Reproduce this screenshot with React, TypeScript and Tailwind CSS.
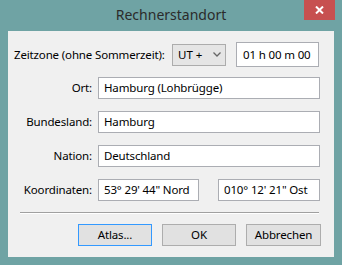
import React from "react";

const font = { fontFamily: '"Noto Sans", "Open Sans", sans-serif' };

const Field: React.FC<{ value: string; className?: string }> = ({ value, className }) => (
  <div
    className={`h-[22px] bg-white border border-[#abadb3] pl-[5px] flex items-center text-[11.5px] tracking-[-0.15px] text-black whitespace-nowrap overflow-hidden ${className ?? ""}`}
  >
    {value}
  </div>
);

const Row: React.FC<{ label: string; children: React.ReactNode }> = ({ label, children }) => (
  <div className="flex items-center h-[22px]">
    <div className="w-[84px] text-right text-[11.5px] tracking-[-0.15px] text-black whitespace-nowrap">{label}</div>
    <div className="ml-[6px] flex">{children}</div>
  </div>
);

const Button: React.FC<{ label: string; primary?: boolean; className?: string }> = ({ label, primary, className }) => (
  <div
    className={`h-[22px] flex items-center justify-center text-[11.5px] tracking-[-0.15px] text-black bg-[#e1e1e1] border ${
      primary ? "border-[#3399ff]" : "border-[#adadad]"
    } ${className ?? ""}`}
  >
    {label}
  </div>
);

export default function App() {
  return (
    <div className="w-[342px] h-[265px] bg-[#6fa3a4] flex flex-col" style={font}>
      <div className="relative h-[31px] flex justify-center">
        <div className="pt-[4px] text-[14px] text-[#2b2b2b]">Rechnerstandort</div>
        <div className="absolute right-[7px] top-0 w-[31px] h-[20px] bg-[#c75050] flex items-center justify-center">
          <svg width="9" height="8" viewBox="0 0 9 8">
            <path d="M1 0.5 L8 7.5 M8 0.5 L1 7.5" stroke="white" strokeWidth="2" />
          </svg>
        </div>
      </div>
      <div className="ml-[8px] w-[326px] h-[226px] bg-[#f0f0f0] flex flex-col">
        <div className="mt-[11px] flex items-center h-[25px]">
          <div className="ml-[6px] w-[158px] text-[11.5px] tracking-[-0.15px] text-black whitespace-nowrap">
            Zeitzone (ohne Sommerzeit):
          </div>
          <div className="w-[54px] h-[22px] bg-[#e5e5e5] border border-[#acacac] flex items-center pl-[5px] text-[11.5px] text-black">
            <span className="flex-1">UT +</span>
            <svg width="8" height="5" viewBox="0 0 8 5" className="mr-[4px]">
              <path d="M0.5 0.5 L4 4 L7.5 0.5" stroke="#666" strokeWidth="1.3" fill="none" />
            </svg>
          </div>
          <div className="ml-[10px] w-[83px] h-[25px] bg-white border border-[#abadb3] pl-[6px] flex items-center text-[11.5px] tracking-[-0.15px] text-black whitespace-nowrap">
            01 h 00 m 00
          </div>
        </div>
        <div className="mt-[10px] flex flex-col gap-[12px]">
          <Row label="Ort:">
            <Field value="Hamburg (Lohbrügge)" className="w-[222px]" />
          </Row>
          <Row label="Bundesland:">
            <Field value="Hamburg" className="w-[222px]" />
          </Row>
          <Row label="Nation:">
            <Field value="Deutschland" className="w-[222px]" />
          </Row>
          <Row label="Koordinaten:">
            <Field value={'53° 29\' 44" Nord'} className="w-[101px]" />
            <Field value={'010° 12\' 21" Ost'} className="ml-[19px] w-[102px]" />
          </Row>
        </div>
        <div className="mt-[11px] ml-[12px] w-[299px] h-[2px] border-t border-[#a0a0a0] border-b-white border-b" />
        <div className="mt-[10px] flex">
          <Button label="Atlas..." primary className="ml-[70px] w-[74px]" />
          <Button label="OK" className="ml-[10px] w-[74px]" />
          <Button label="Abbrechen" className="ml-[10px] w-[75px]" />
        </div>
      </div>
    </div>
  );
}
